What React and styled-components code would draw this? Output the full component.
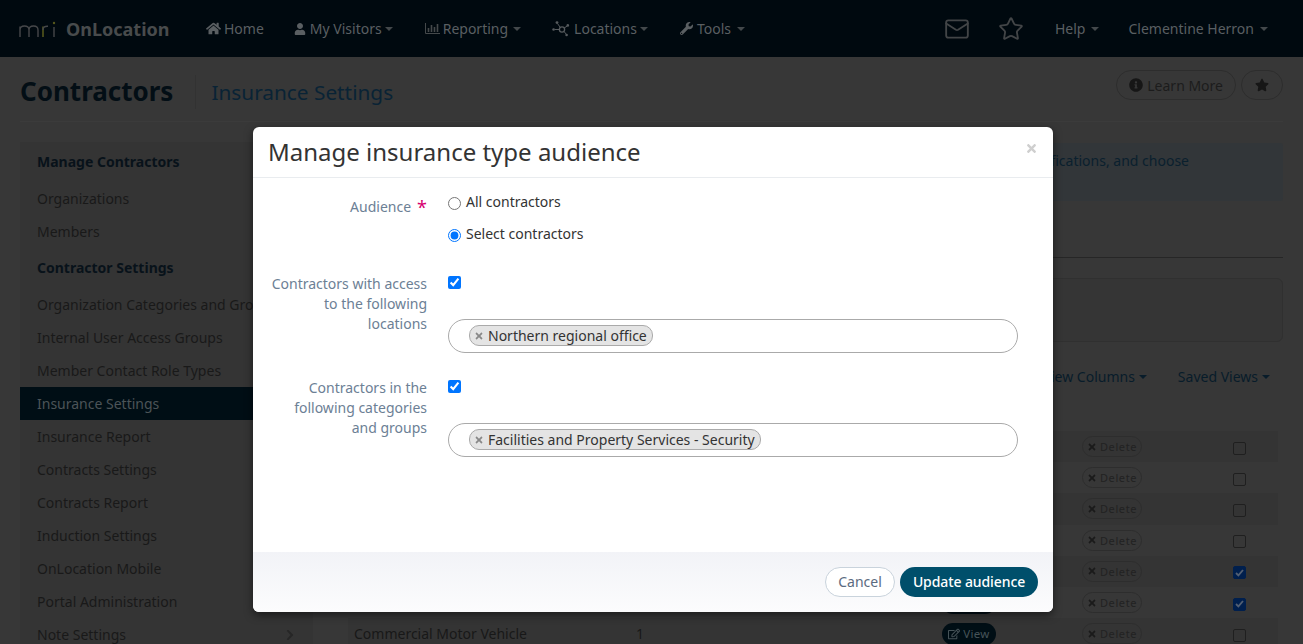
import React from "react";
import styled, { createGlobalStyle } from "styled-components";
import { FaHome, FaUser, FaWrench, FaInfoCircle, FaStar, FaTimes, FaRegEdit, FaChevronRight } from "react-icons/fa";
import { Mail, Star } from "lucide-react";

const Global = createGlobalStyle`
  html, body { margin: 0; height: 100%; overflow: hidden; background: #373737; }
  body { font-family: "Noto Sans", "Liberation Sans", sans-serif; font-size: 14px; color: #191919; }
  * { box-sizing: border-box; }
`;

const Page = styled.div`
  position: relative;
  width: 1303px;
  height: 644px;
  overflow: hidden;
`;

const TopBar = styled.header`
  height: 57px;
  background: #00090f;
  display: flex;
  align-items: center;
  color: #5a5f62;
  padding-right: 35px;
`;
const Brand = styled.div`
  display: flex;
  align-items: center;
  width: 206px;
  padding-left: 19px;
  gap: 9px;
  font-weight: 700;
  font-size: 18px;
  color: #484b4c;
`;
const NavItem = styled.div`
  display: flex;
  align-items: center;
  gap: ${(p) => p.$gap ?? 4}px;
  margin-left: ${(p) => p.$ml ?? 0}px;
  white-space: nowrap;
  svg { flex: none; }
`;
const Caret = styled.span`
  display: inline-block;
  width: 0;
  height: 0;
  margin-left: ${(p) => p.$ml ?? 0}px;
  border-left: 4px solid transparent;
  border-right: 4px solid transparent;
  border-top: 4px solid ${(p) => p.$color ?? "#43484b"};
`;
const Spacer = styled.div`
  flex: 1;
`;

const TitleRow = styled.div`
  height: 65px;
  margin: 0 20px;
  display: flex;
  align-items: center;
  border-bottom: 1px solid #3b3b3b;
`;
const PageTitle = styled.h1`
  margin: 3px 0 0;
  font-size: 26px;
  line-height: 34px;
  font-weight: 700;
  color: #030e15;
  padding-right: 22px;
`;
const SubTitle = styled.div`
  font-size: 20.8px;
  line-height: 34px;
  color: #092335;
  padding-left: 15px;
  margin-top: 5px;
  border-left: 1px solid #323232;
`;
const PillOutline = styled.div`
  height: 30px;
  display: flex;
  align-items: center;
  gap: 4px;
  padding: 0 ${(p) => p.$px ?? 12}px;
  margin-top: -8px;
  margin-left: ${(p) => p.$ml ?? 0}px;
  border: 1px solid #2d2d2d;
  border-radius: 15px;
  color: #1c1c1c;
  svg { color: #161616; }
`;

const Columns = styled.div`
  display: flex;
  padding: 20px 20px 0;
`;
const Sidebar = styled.nav`
  width: 293px;
  flex: none;
  background: #343434;
  height: 510px;
`;
const SideHead = styled.div`
  height: 40px;
  padding: 0 17px 2px;
  display: flex;
  align-items: center;
  font-weight: 700;
  color: #08121a;
`;
const SideLink = styled.div`
  height: 33px;
  padding: 0 17px;
  display: flex;
  align-items: center;
  justify-content: space-between;
  white-space: nowrap;
  overflow: hidden;
  color: ${(p) => (p.$active ? "#4c5458" : "#191919")};
  background: ${(p) => (p.$active ? "#000e15" : "transparent")};
  svg { color: #262626; flex: none; }
`;

const Main = styled.main`
  flex: 1;
  margin-left: 35px;
  min-width: 0;
`;
const InfoBox = styled.div`
  height: 58px;
  margin-top: 1px;
  background: #323639;
  border-radius: 3px;
  padding: 8px 94px 0 0;
  display: flex;
  justify-content: flex-end;
  color: #0a202e;
  line-height: 20px;
`;
const Rule = styled.div`
  margin-top: 56px;
  border-top: 1px solid #262626;
`;
const FilterBox = styled.div`
  height: 64px;
  margin-top: 20px;
  background: #353535;
  border: 1px solid #303030;
  border-radius: 6px;
`;
const ViewBar = styled.div`
  display: flex;
  justify-content: flex-end;
  gap: 31px;
  margin-top: 25px;
  padding-right: 13px;
  color: #081c2a;
  line-height: 20px;
`;
const ViewLink = styled.div`
  display: flex;
  align-items: center;
`;
const Rows = styled.div`
  margin-top: 44px;
  width: 930px;
`;
const Row = styled.div`
  height: 31.2px;
  display: grid;
  grid-template-columns: 282px 306px 140px 151px 1fr;
  align-items: center;
  padding-left: 6px;
  background: ${(p) => (p.$odd ? "#343434" : "transparent")};
  color: #181818;
`;
const ViewButton = styled.div`
  width: 54px;
  height: 22px;
  border-radius: 11px;
  background: #000e15;
  color: #465358;
  font-size: 11.5px;
  letter-spacing: 0.3px;
  display: flex;
  align-items: center;
  justify-content: center;
  gap: 3px;
`;
const DeleteButton = styled.div`
  width: 60px;
  height: 21px;
  border-radius: 11px;
  border: 1px solid #2d2d2d;
  color: #222;
  font-size: 11px;
  letter-spacing: 0.6px;
  display: flex;
  align-items: center;
  justify-content: center;
  gap: 3px;
  svg { color: #1a1a1a; }
`;
const RowCheck = styled.div`
  width: 13px;
  height: 13px;
  margin-top: 3px;
  border-radius: 2px;
  border: 1px solid ${(p) => (p.$on ? "#001f4d" : "#1f1f1f")};
  display: flex;
  align-items: center;
  justify-content: center;
  background: ${(p) => (p.$on ? "#001f4d" : "transparent")};
`;

const Modal = styled.div`
  position: absolute;
  left: 253px;
  top: 127px;
  width: 800px;
  height: 485px;
  background: #fff;
  border-radius: 6px;
  box-shadow: 0 3px 9px rgba(0, 0, 0, 0.5);
  display: flex;
  flex-direction: column;
  overflow: hidden;
  color: #333;
`;
const ModalHead = styled.div`
  height: 51px;
  flex: none;
  padding: 0 15px;
  display: flex;
  align-items: center;
  justify-content: space-between;
  border-bottom: 1px solid #e9ecef;
`;
const ModalTitle = styled.h2`
  margin: 0;
  font-size: 24px;
  line-height: 50px;
  font-weight: 400;
  color: #333;
`;
const Close = styled.span`
  display: flex;
  margin-top: -8px;
  color: #cfcfcf;
`;
const ModalBody = styled.div`
  flex: 1;
  padding: 13px 35px 0 15px;
`;
const FormRow = styled.div`
  display: grid;
  grid-template-columns: 159px 1fr;
  column-gap: 21px;
  height: ${(p) => p.$h}px;
`;
const FieldLabel = styled.div`
  text-align: right;
  line-height: 20px;
  color: #6c8095;
  padding-top: ${(p) => p.$pt ?? 0}px;
`;
const Required = styled.span`
  color: #d6006e;
  font-size: 18px;
  line-height: 14px;
  margin-left: 6px;
  vertical-align: -2px;
`;
const Option = styled.label`
  display: flex;
  align-items: center;
  gap: 5px;
  height: 20px;
  margin-bottom: 12px;
  input { margin: 5px 0 0; width: 13px; height: 13px; }
`;
const CheckLine = styled.div`
  height: 45px;
  padding-top: 2px;
  input { display: block; margin: 0; width: 13px; height: 13px; }
`;
const MultiSelect = styled.div`
  height: 34px;
  border: 1px solid #aaa;
  border-radius: 17px;
  padding: 5px 0 0 20px;
`;
const Tag = styled.span`
  display: inline-flex;
  align-items: center;
  height: 21px;
  padding: 0 5px 0 4px;
  gap: 4px;
  background: #e4e4e4;
  border: 1px solid #aaa;
  border-radius: 10px;
  color: #333;
  line-height: 19px;
  svg { color: #888; }
`;
const ModalFoot = styled.div`
  height: 60px;
  flex: none;
  padding: 0 15px;
  display: flex;
  align-items: center;
  justify-content: flex-end;
  gap: 5px;
  background: linear-gradient(#f2f3f7, #fcfcfd);
`;
const CancelButton = styled.button`
  height: 30px;
  width: 70px;
  padding: 0 0 2px;
  font: inherit;
  background: #fff;
  color: #5b6b80;
  border: 1px solid #c9d3dc;
  border-radius: 15px;
`;
const PrimaryButton = styled.button`
  height: 30px;
  width: 138px;
  padding: 0 0 2px;
  font: inherit;
  font-weight: 500;
  letter-spacing: -0.1px;
  background: #004f6b;
  color: #fff;
  border: 0;
  border-radius: 15px;
`;

const MriLogo = () => (
  <svg width="38" height="18" viewBox="0 0 38 18" fill="none" strokeWidth="1.4" stroke="#46484a">
    <path d="M1 17V6.5M1 10c0-3 2-4 4.5-4S10 7 10 10v7M10 10c0-3 2-4 4.5-4s4.5 1 4.5 4v7" />
    <path d="M24 17V6.5" stroke="#55581c" strokeWidth="1.6" />
    <path d="M24 10c0-3 2-4 5-3.8" stroke="#46484a" />
    <path d="M35 7v10" />
    <circle cx="35" cy="3" r="1.2" fill="#55581c" stroke="none" />
  </svg>
);
const ChartIcon = () => (
  <svg width="15" height="11" viewBox="0 0 15 11" fill="none" stroke="#45494b">
    <path d="M.5 0v10.5H15" />
    <path d="M3.5 9V5M6.5 9V2M9.5 9V4M12.5 9V1" strokeWidth="1.6" />
  </svg>
);
const NodesIcon = () => (
  <svg width="18" height="16" viewBox="0 0 18 16" fill="#565b5e" stroke="#565b5e">
    <circle cx="10" cy="8.5" r="2.6" fill="none" strokeWidth="1.3" />
    <path d="M8.3 6.5 5.5 2.5M12.2 7l3-2M12 10.5l2.5 3M7.2 8.5H3" strokeWidth="1" />
    <circle cx="5" cy="1.6" r="1.4" stroke="none" />
    <circle cx="15.8" cy="4.4" r="1.3" stroke="none" />
    <circle cx="14.6" cy="14" r="1.3" stroke="none" />
    <circle cx="1.6" cy="8.5" r="1.3" stroke="none" />
  </svg>
);

const settings = [
  "Organization Categories and Groups",
  "Internal User Access Groups",
  "Member Contact Role Types",
  "Insurance Settings",
  "Insurance Report",
  "Contracts Settings",
  "Contracts Report",
  "Induction Settings",
  "OnLocation Mobile",
  "Portal Administration",
  "Note Settings",
];
const rows = [
  { on: false },
  { on: false },
  { on: false },
  { on: false },
  { on: true },
  { on: true },
  { on: false, name: "Commercial Motor Vehicle", count: "1" },
];

export default function App() {
  return (
    <Page>
      <Global />
      <TopBar>
        <Brand>
          <MriLogo />
          <span>OnLocation</span>
        </Brand>
        <NavItem $gap={3}><FaHome size={15} />Home</NavItem>
        <NavItem $ml={30}><FaUser size={12} />My Visitors<Caret $ml={-1} /></NavItem>
        <NavItem $ml={32} $gap={3}><ChartIcon />Reporting<Caret $ml={2} /></NavItem>
        <NavItem $ml={31}><NodesIcon />Locations<Caret $ml={-1} /></NavItem>
        <NavItem $ml={32}><FaWrench size={13} />Tools<Caret $ml={2} /></NavItem>
        <Spacer />
        <NavItem><Mail size={26} strokeWidth={1.7} color="#424547" /></NavItem>
        <NavItem $ml={28}><Star size={26} strokeWidth={1.7} color="#424547" /></NavItem>
        <NavItem $ml={31}>Help<Caret $ml={2} /></NavItem>
        <NavItem $ml={29}>Clementine Herron<Caret $ml={2} /></NavItem>
      </TopBar>

      <TitleRow>
        <PageTitle>Contractors</PageTitle>
        <SubTitle>Insurance Settings</SubTitle>
        <Spacer />
        <PillOutline><FaInfoCircle size={14} />Learn More</PillOutline>
        <PillOutline $ml={5} $px={13}><FaStar size={14} /></PillOutline>
      </TitleRow>

      <Columns>
        <Sidebar>
          <SideHead>Manage Contractors</SideHead>
          <SideLink>Organizations</SideLink>
          <SideLink>Members</SideLink>
          <SideHead>Contractor Settings</SideHead>
          {settings.map((s) => (
            <SideLink key={s} $active={s === "Insurance Settings"}>
              {s === "Note Settings" ? (
                <>
                  <span>{s}</span>
                  <FaChevronRight size={12} />
                </>
              ) : (
                s
              )}
            </SideLink>
          ))}
        </Sidebar>

        <Main>
          <InfoBox>notifications, and choose</InfoBox>
          <Rule />
          <FilterBox />
          <ViewBar>
            <ViewLink>View Columns<Caret $ml={4} $color="#081c2a" /></ViewLink>
            <ViewLink>Saved Views<Caret $ml={4} $color="#081c2a" /></ViewLink>
          </ViewBar>
          <Rows>
            {rows.map((r, i) => (
              <Row key={i} $odd={i % 2 === 0}>
                <span>{r.name}</span>
                <span>{r.count}</span>
                <ViewButton>
                  {r.name && (
                    <>
                      <FaRegEdit size={12} />View
                    </>
                  )}
                </ViewButton>
                <DeleteButton><FaTimes size={10} />Delete</DeleteButton>
                <RowCheck $on={r.on}>
                  {r.on && (
                    <svg width="9" height="8" viewBox="0 0 9 8" fill="none" stroke="#525f72" strokeWidth="1.8">
                      <path d="M1 4l2.4 2.4L8 1" />
                    </svg>
                  )}
                </RowCheck>
              </Row>
            ))}
          </Rows>
        </Main>
      </Columns>

      <Modal>
        <ModalHead>
          <ModalTitle>Manage insurance type audience</ModalTitle>
          <Close><FaTimes size={13} /></Close>
        </ModalHead>
        <ModalBody>
          <FormRow $h={83}>
            <FieldLabel $pt={6}>Audience<Required>*</Required></FieldLabel>
            <div>
              <Option><input type="radio" name="aud" />All contractors</Option>
              <Option><input type="radio" name="aud" defaultChecked />Select contractors</Option>
            </div>
          </FormRow>
          <FormRow $h={104}>
            <FieldLabel>Contractors with access to the following locations</FieldLabel>
            <div>
              <CheckLine><input type="checkbox" defaultChecked /></CheckLine>
              <MultiSelect>
                <Tag><FaTimes size={10} />Northern regional office</Tag>
              </MultiSelect>
            </div>
          </FormRow>
          <FormRow $h={104}>
            <FieldLabel>Contractors in the following categories and groups</FieldLabel>
            <div>
              <CheckLine><input type="checkbox" defaultChecked /></CheckLine>
              <MultiSelect>
                <Tag><FaTimes size={10} />Facilities and Property Services - Security</Tag>
              </MultiSelect>
            </div>
          </FormRow>
        </ModalBody>
        <ModalFoot>
          <CancelButton>Cancel</CancelButton>
          <PrimaryButton>Update audience</PrimaryButton>
        </ModalFoot>
      </Modal>
    </Page>
  );
}
